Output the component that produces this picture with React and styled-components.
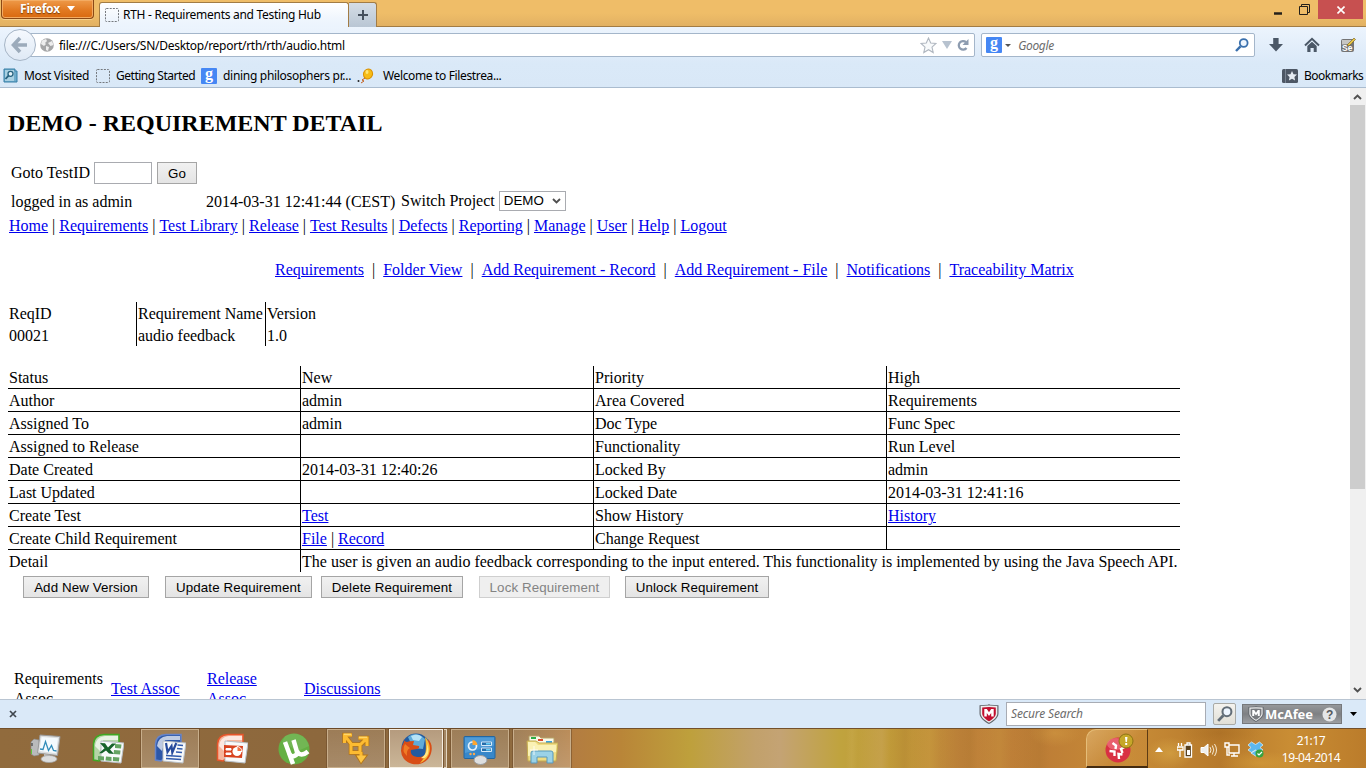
import React from "react";
import styled, { createGlobalStyle } from "styled-components";

const Global = createGlobalStyle`
  *{box-sizing:border-box}
  html,body{margin:0;padding:0;overflow:hidden;background:#fff}
  svg{display:block;flex:none}
`;
const ui = `"Noto Sans","Open Sans",sans-serif`;

const Window = styled.div`width:1366px;height:768px;display:flex;flex-direction:column;overflow:hidden;font:12px ${ui};color:#000;`;
const Label = styled.span`
  white-space:pre;line-height:16px;flex:none;
  font-size:${p => p.$size || 12}px;letter-spacing:${p => p.$ls || 0}px;
  color:${p => p.$color || "#000"};font-style:${p => (p.$italic ? "italic" : "normal")};
`;

/* ---------- title bar ---------- */
const TitleBar = styled.header`height:27px;flex:none;display:flex;align-items:flex-start;background:linear-gradient(#efbd68 0,#efbd68 50%,#e2b163 100%);border-bottom:1px solid #a27c45;`;
const FirefoxButton = styled.div`
  width:93px;height:19px;margin-left:1px;padding:0 0 1px 18px;display:flex;align-items:center;gap:7px;
  border:1px solid #8b4916;border-top:0;border-radius:0 0 4px 4px;
  background:linear-gradient(#ee9a49,#e27a22 55%,#d9690f);box-shadow:inset 0 0 0 1px #f3ab62,0 1px 0 #f5cf8c;
  color:#fff;font-weight:700;font-size:12px;line-height:16px;letter-spacing:-.2px;text-shadow:0 1px 1px #7a3c08;
`;
const Tab = styled.div`width:250px;height:26px;margin:2px 0 -1px 5px;padding:0 0 2px 5px;display:flex;align-items:center;gap:4px;border:1px solid #a27c45;border-bottom:0;border-radius:3px 3px 0 0;background:linear-gradient(#fff,#f0f6fd 60%,#ebf3fd);`;
const NewTab = styled.div`width:28px;height:25px;margin-top:2px;display:flex;align-items:center;justify-content:center;background:linear-gradient(#d5dde6,#b9c6d4);border:1px solid #a27c45;border-left:0;border-bottom:0;border-radius:0 3px 0 0;`;
const WindowControls = styled.div`margin-left:auto;display:flex;height:19px;align-items:center;`;
const Control = styled.div`width:${p => p.$w}px;height:19px;display:flex;align-items:center;justify-content:center;background:${p => p.$bg || "transparent"};`;

/* ---------- tool bars ---------- */
const Chrome = styled.div`height:61px;flex:none;background:linear-gradient(#ecf4fd 0,#dae9f8 60%,#d9e8f7 100%);border-bottom:1px solid #aabccf;`;
const NavBar = styled.div`height:36px;padding:6px 0 0 4px;display:flex;align-items:flex-start;`;
const BackButton = styled.div`width:32px;height:32px;margin-top:-4px;border-radius:50%;border:1px solid #a6b5c6;background:linear-gradient(#f5f9fe,#dfe9f5);display:flex;align-items:center;justify-content:center;z-index:1;flex:none;`;
const Field = styled.div`width:${p => p.$w}px;height:24px;display:flex;align-items:center;background:#fff;border:1px solid #a4b6ca;border-radius:2px;& > span{padding-top:1px}`;
const UrlField = styled(Field)`margin-left:-7px;padding:0 5px 0 10px;gap:5px;& > span{margin-right:auto}`;
const SearchField = styled(Field)`margin-left:6px;padding:0 5px 0 4px;`;
const SearchHint = styled(Label)`margin-left:7px;`;
const Buttons = styled.div`display:flex;gap:20px;margin-left:13px;height:24px;align-items:center;`;
const Bookmarks = styled.div`height:24px;padding:1px 0 0 3px;display:flex;align-items:center;`;
const Bookmark = styled.div`display:flex;align-items:center;gap:${p => p.$gap || 5}px;width:${p => p.$w}px;flex:none;`;
const Spacer = styled.div`flex:1;`;

/* ---------- page ---------- */
const Viewport = styled.main`height:611px;flex:none;display:flex;overflow:hidden;background:#fff;`;
const Page = styled.div`width:1350px;height:611px;padding:0 8px;overflow:hidden;font:16px/22px "Liberation Serif","Times New Roman",serif;`;
const Heading = styled.h2`margin:21px 0 0;font-size:24px;line-height:28px;font-weight:700;`;
const Line = styled.div`height:${p => p.$h}px;margin-top:${p => p.$mt || 0}px;padding-left:${p => p.$pl || 0}px;letter-spacing:${p => p.$ls || 0}px;display:flex;align-items:center;white-space:pre;`;
const LoginName = styled.span`width:195px;padding-top:1px;`;
const Stamp = styled.span`width:195px;padding-top:1px;`;
const A = styled.a`color:#0000ee;text-decoration:underline;`;
const TestInput = styled.input`width:58px;height:22px;margin:0 5px 0 4px;padding:0;border:1px solid #a9abb0;background:#fff;`;
const FormButton = styled.button`
  width:${p => p.$w}px;height:22px;margin:0 ${p => p.$mr || 0}px 0 0;padding:0;flex:none;white-space:nowrap;
  font:13.33px "Liberation Sans",Arial,sans-serif;letter-spacing:.1px;
  color:#000;border:1px solid #a5a5a5;background:linear-gradient(#f1f1f1,#e4e4e4);
  &:disabled{color:#838383;border-color:#cfcfcf;background:#efefef}
`;
const Select = styled.div`width:67px;height:20px;margin-left:4px;padding:0 4px;display:flex;align-items:center;justify-content:space-between;border:1px solid #a9abb0;font:13.33px/18px "Liberation Sans",Arial,sans-serif;`;
const SummaryGrid = styled.div`display:grid;grid-template-columns:128px 129px 80px;grid-auto-rows:22px;margin-top:21px;`;
const SummaryCell = styled.div`padding-left:1px;line-height:24px;white-space:nowrap;border-left:${p => (p.$line ? "1px solid #000" : "0")};`;
const DetailGrid = styled.div`display:grid;grid-template-columns:292px 293px 293px 294px;grid-auto-rows:23px;margin-top:20px;width:1172px;`;
const DetailCell = styled.div`
  padding-left:1px;line-height:24px;white-space:nowrap;
  border-left:${p => (p.$line ? "1px solid #000" : "0")};
  border-bottom:${p => (p.$last ? "0" : "1px solid #000")};
  grid-column:${p => (p.$wide ? "span 3" : "auto")};height:${p => (p.$last ? 22 : 23)}px;
`;
const Assoc = styled.div`display:flex;align-items:center;height:42px;margin-top:70px;padding-left:6px;line-height:20px;`;
const AssocCell = styled.div`width:${p => p.$w}px;flex:none;`;
const ScrollBar = styled.div`width:16px;height:611px;padding-right:1px;display:flex;flex-direction:column;background:#f0f0f0;align-items:center;`;
const ScrollArrow = styled.div`height:17px;display:flex;align-items:center;transform:${p => (p.$down ? "rotate(180deg)" : "none")};`;
const ScrollThumb = styled.div`width:15px;height:384px;background:#cdcdcd;margin-bottom:auto;`;

/* ---------- add-on bar ---------- */
const AddonBar = styled.div`height:29px;flex:none;display:flex;align-items:center;padding-left:9px;background:#dae9f8;border-top:1px solid #b9c5d2;`;
const CloseBar = styled.div`width:970px;flex:none;`;
const SecureInput = styled.div`width:200px;height:24px;margin-left:7px;padding-left:4px;display:flex;align-items:center;border:1px solid #a8acb4;background:#fff;`;
const SecureButton = styled.div`width:23px;height:22px;margin-left:7px;display:flex;align-items:center;justify-content:center;border:1px solid #a9aaa6;border-radius:2px;background:linear-gradient(#f4f3ef,#e1dfd6);`;
const McAfee = styled.div`width:100px;height:20px;margin:0 8px 0 6px;padding:0 4px 0 5px;display:flex;align-items:center;gap:1px;border:1px solid #77797c;background:linear-gradient(#96989b,#7e8083 50%,#9c9ea1);color:#fff;font:700 13px/18px ${ui};letter-spacing:-.1px;& > svg:last-child{margin-left:auto}`;

/* ---------- task bar ---------- */
const Taskbar = styled.footer`
  height:40px;flex:none;display:flex;padding-left:17px;border-top:1px solid #73502b;
  background:
    radial-gradient(ellipse 26px 14px at 1055px 4px,#e0ae4c50,transparent),
    radial-gradient(ellipse 24px 16px at 1170px 24px,#dfb14b80,transparent),
    radial-gradient(ellipse 40px 12px at 1260px 34px,#e2ad4260,transparent),
    radial-gradient(ellipse 40px 12px at 1220px 4px,#9f651e60,transparent),
    linear-gradient(91deg,transparent 846px,#d0b05a40 852px,transparent 858px,#d4b07a40 882px,transparent 890px,#a2702a30 905px,transparent 912px,#d2a84540 930px,transparent 940px,#9f6a2838 970px,transparent 978px,#d2a84530 1000px,transparent 1012px,#a2702a30 1040px,transparent 1050px),
    linear-gradient(90deg,#916b3d 0,#8d683d 320px,#8f6b3f 510px,#b37d41 575px,#b98538 620px,#bea03c 690px,#c2a16b 755px,#c4a374 780px,#c0a33e 840px,#c09838 900px,#bf833a 960px,#bd7d36 1040px,#c88c37 1130px,#b77a2c 1220px,#c98d34 1290px,#bb7c2b 1366px);
`;
const Task = styled.div`
  width:58px;height:39px;margin-right:4px;display:flex;align-items:center;justify-content:center;flex:none;
  border:1px solid ${p => (p.$on ? (p.$active ? "#f5eee2" : "#c8ae8b") : "transparent")};
  background:${p => (p.$active ? "linear-gradient(#b59b7e,#cbb698)" : p.$on ? "linear-gradient(#ffffff22,#ffffff3a)" : "transparent")};
  box-shadow:${p => (p.$on ? "0 0 0 1px #64452677" : "none")};
`;
const TaskStack = styled.div`width:58px;margin-right:4px;display:flex;flex:none;gap:1px;`;
const StackedTask = styled(Task)`width:54px;margin:0;`;
const StackEdge = styled.div`width:4px;border:1px solid #e3d6c0;border-left:0;background:#a48764;`;
const Alert = styled.div`width:62px;height:39px;margin-left:auto;padding-left:4px;display:flex;align-items:center;justify-content:center;border:1px solid #e5bd78;border-right-color:#5d3b13;border-bottom:2px solid #442b10;border-radius:10px 0 0 0;background:linear-gradient(135deg,#e3b774aa,#c98b3b55 60%);`;
const Tray = styled.div`width:118px;height:39px;display:flex;align-items:center;padding:2px 0 0 7px;gap:7px;& > svg:first-child{margin-right:6px}`;
const Clock = styled.div`width:100px;height:39px;padding:4px 10px 0 0;display:flex;flex-direction:column;align-items:center;color:#fff;font-size:12px;line-height:16.500px;letter-spacing:-.42px;`;

/* ---------- icons ---------- */
const Dotted = () => <svg width="14" height="14" viewBox="0 0 14 14"><rect x=".5" y=".5" width="13" height="13" rx="1" fill="none" stroke="#74787d" strokeDasharray="2 1.2" /></svg>;
const Down = ({ w = 8, h = 5, c = "#000" }) => <svg width={w} height={h} viewBox="0 0 8 5" preserveAspectRatio="none"><path d="M0 0h8L4 5z" fill={c} /></svg>;
const Back = () => <svg width="18" height="18" viewBox="0 0 18 18"><path d="M9 2 2.5 9 9 16M3.5 9H16" fill="none" stroke="#9cabbb" strokeWidth="3.6" /></svg>;
const Globe = () => <svg width="14" height="14" viewBox="0 0 14 14"><circle cx="7" cy="7" r="6.8" fill="#a5a6a7" /><path d="M2 2.5 6 1l1 2-2 2 1 1-2 2-3-2zM8 5l4-2 1.500 4-3 1zM6 8l3 1-1 4-2-1z" fill="#ededed" /></svg>;
const Star = () => <svg width="17" height="17" viewBox="0 0 17 17"><path d="m8.5 1 2.2 5 5.3.5-4 3.7 1.200 5.300-4.700-2.800-4.700 2.800L5 10.200 1 6.500 6.300 6z" fill="#f8fafb" stroke="#b0b7c0" strokeWidth="1.100" /></svg>;
const Reload = () => <svg width="12" height="13" viewBox="0 0 12 13"><path d="M9.500 9A4.300 4.300 0 1 1 9 3.200" fill="none" stroke="#8d9cb0" strokeWidth="2.300" /><path d="M11.500 0v6H5.500z" fill="#8d9cb0" /></svg>;
const GoogleTile = styled.b`width:16px;height:16px;flex:none;border-radius:1px;background:#4587f4;color:#fff;text-align:center;font:700 16px/11px "Liberation Serif",serif;`;
const Magnifier = ({ c = "#3a70ad", s = 14 }) => <svg width={s} height={s} viewBox="0 0 14 14"><circle cx="8.700" cy="5" r="3.900" fill="#eef6ff" stroke={c} strokeWidth="1.800" /><path d="m5.500 8.300-4.500 4.700" stroke={c} strokeWidth="2.400" /></svg>;
const Download = () => <svg width="16" height="16" viewBox="0 0 16 16"><path d="M5.200 1h5.400v6H15l-7 7.500L1 7h4.200z" fill="#4b5867" /></svg>;
const Home = () => <svg width="16" height="16" viewBox="0 0 16 16"><path d="m1 8.500 7-6.700 7 6.700" fill="none" stroke="#4b5867" strokeWidth="2" /><path d="m3.300 9 4.700-4.300L12.700 9v6h-3v-4H6.500v4H3.300z" fill="#4b5867" /></svg>;
const Selenium = () => <svg width="16" height="16" viewBox="0 0 16 16"><rect x="1" y="2" width="13" height="13" rx="2" fill="#747474" /><path d="M2 3h10v4L2 7.500z" fill="#c6c6c4" /><text x="2" y="14" fill="#fff" fontSize="8.500" fontWeight="700" fontFamily="Liberation Sans">Se</text><path d="M7 8 14 1l1.500 1.500L9 9z" fill="#e7c546" stroke="#6f5a22" strokeWidth=".6" /></svg>;
const MostVisited = () => <svg width="15" height="15" viewBox="0 0 15 15"><path d="M1 1h11v2h2v11H1z" fill="#6faccb" stroke="#367ea6" /><path d="M2 2h9v11H2z" fill="#a9d0e2" /><circle cx="7.500" cy="5.800" r="2.500" fill="#e3f2f8" stroke="#27627f" strokeWidth="1.300" /><path d="M5.600 7.700 2.500 11" stroke="#27627f" strokeWidth="1.800" /></svg>;
const Balloon = () => <svg width="17" height="16" viewBox="0 0 17 16"><ellipse cx="11" cy="6" rx="4.500" ry="5" fill="#f7bc16" stroke="#d99205" transform="rotate(20 11 6)" /><ellipse cx="10" cy="4" rx="1.500" ry="2" fill="#ffe674" /><path d="m8 10-3 2 2 1-3 2" stroke="#c4601e" fill="none" /><circle cx="1.500" cy="13" r="1" fill="#222" /></svg>;
const BookmarkMenu = () => <svg width="16" height="14" viewBox="0 0 16 14"><rect width="16" height="14" rx="1.500" fill="#4d5765" /><path d="M3.500 0v14" stroke="#788391" /><path d="m10 2 1.500 3.200 3.500.4-2.600 2.300.7 3.600-3.100-1.800-3.100 1.800.7-3.600L5 5.600l3.500-.4z" fill="#e6edf5" /></svg>;
const Chevron = () => <svg width="9" height="6" viewBox="0 0 9 6"><path d="m1 5 3.500-3.500L8 5" fill="none" stroke="#505050" strokeWidth="1.900" /></svg>;
const Cross = () => <svg width="8" height="8" viewBox="0 0 8 8"><path d="m1 1 6 6M7 1 1 7" stroke="#3f464e" strokeWidth="1.700" /></svg>;
const Shield = ({ c = "#c20f2f", w = 20 }) => <svg width={w} height={w} viewBox="0 0 20 20"><path d="m10 0 1 .7 8.500.5v8.300C19.500 14 14 18 10 20 6 18 .5 14 .5 9.500V1.200L9 .7z" fill="#62676d" /><path d="M10 1.500 18.300 2v7.500c0 4-4.800 7.400-8.300 9.200-3.500-1.800-8.300-5.200-8.300-9.200V2z" fill="#eee" /><path d="m10 3 6.800.4v6c0 3.300-4 6.200-6.800 7.900-2.800-1.700-6.800-4.600-6.800-7.900v-6z" fill={c} /><path d="M5.300 12.500V5h2.500L10 8.300 12.200 5h2.500v7.500h-2.500V9L10 12 7.800 9v3.500z" fill="#fff" /></svg>;

const Monitor = () => <svg width="32" height="32" viewBox="0 0 32 32"><path d="M1 9 4 6l5 1v15l-5 1-3-2z" fill="#b9babb" stroke="#8a8a8a" strokeWidth=".6" /><path d="M2 10v3" stroke="#2b2b2b" /><path d="M1.500 16v5" stroke="#63c33c" /><path d="m10 2 20 1.500-2.500 19L7.500 20z" fill="#dcdedf" stroke="#999" /><path d="m11.500 4 16.500 1.200-2 15L9.500 18z" fill="#f5fbfe" /><path d="m10 16 3 .5 2.500-8 3 9 3-5 2 5 3 .5" fill="none" stroke="#318cb9" strokeWidth="1.300" /><path d="m14 21 6 1v4h-6z" fill="#bfc1c2" /><ellipse cx="19" cy="26" rx="8" ry="3.500" fill="#dcdddd" stroke="#a4a5a6" strokeWidth=".7" /></svg>;
const OfficeBase = ({ a, b, children }) => <svg width="32" height="32" viewBox="0 0 32 32"><path d="M1.500 27V11Q2 2 12 1.500h15v9L7 28z" fill={a} stroke={b} strokeWidth="1.500" /><path d="M3 13Q4 4 13 3h13v4H11L8 18z" fill="#ffffffb0" /><path d="m9 8 23 2-3 20-20-2z" fill="#f8fafb" stroke="#b9bfc5" />{children}</svg>;
const Excel = () => <OfficeBase a="#b5d5a8" b="#3fa823"><path d="m8 10 5 .3 3 4.200 4-4h4l-6 6 4 4.500-5-.4-3-3-4 2.700H7l5.500-5z" fill="#17632b" /><path d="m23 11 6.500.5-.5 4-6-.5zM22 17l6.500.5-.4 4-6.500-.5zM6 23l6 .5v4l-6-.5zM14 23.500l5.500.4v4l-6-.5zM21 24l6.400.4-.5 4-6-.5z" fill="#65a463" /></OfficeBase>;
const Word = () => <OfficeBase a="#2d57a8" b="#6684c9"><path d="m12 10 1.500 9 4-6 .8 6.500 4-9.500" fill="none" stroke="#274b9c" strokeWidth="2.200" /><path d="m23.500 12 5.500.5M23 15.500l5.500.5M22 19l6 .5M12 22.500l15.500 1M12 25.500l15 1" stroke="#315bac" strokeWidth="1.700" /></OfficeBase>;
const Ppt = () => <OfficeBase a="#f6b69c" b="#e7552a"><path d="m8 12 19 1-1 12-18-1z" fill="#d8431f" /><circle cx="21" cy="18.500" r="4.500" fill="#fff" /><path d="M21 18.500v-5a5 5 0 0 1 5 5z" fill="#ef7245" stroke="#fff" /><path d="M10 15.500h5v1.500h-5zM10 20h5v1.500h-5z" fill="#fff" stroke="#fff" /></OfficeBase>;
const UTorrent = () => <svg width="32" height="32" viewBox="0 0 32 32"><circle cx="16" cy="16" r="15.500" fill="#64af43" /><path d="M7 3A16 16 0 0 1 31 13L20 18 4 9z" fill="#ffffff18" /><path d="m7 9 4.500 12c2 4 8 2 7.500-2L15.500 7M19 18c2 5 7 4 11 .5M11 20l4 11" fill="none" stroke="#fff" strokeWidth="4.500" /></svg>;
const VMware = () => <svg width="30" height="33" viewBox="0 0 30 33"><g fill="none" stroke="#b57618" strokeWidth="4.600"><path d="M11 3H3.500v8M4 4l7 9M17.500 6H26v8M25 7l-6 6M10 12.500h9v8h-9zM20 20v5" /></g><path d="M13.500 22.500h14L20 32.500z" fill="#b57618" /><g fill="none" stroke="#fdbb31" strokeWidth="3"><path d="M11 3H3.500v8M4 4l7 9M17.500 6H26v8M25 7l-6 6M10 12.500h9v8h-9zM20 20v5" /></g><path d="M15.500 23.500h10L20 31z" fill="#fdc544" /><path d="M3 2.200h7M18 5.200h8" stroke="#ffe384" strokeWidth="1" /></svg>;
const Firefox = () => <svg width="34" height="34" viewBox="0 0 34 34"><circle cx="17" cy="16" r="14.500" fill="#235a9f" /><path d="M9 5Q17-2 26 7l-2 10-10-1z" fill="#5fabd9" /><path d="M12 4q7-3 11 1l-3 4-6-1z" fill="#b6e3f7" /><path d="M4 6q1 3 1 4-6 9 0 17c7 8 21 7 26-3 3-7 2-13-2-17 1 9-1 18-9 18-6 0-9-3-8-7l6-1q3-1 2-3l-6-1 1-4q-5 0-7 1Q4 9 4 6" fill="#d84d16" /><path d="M6 12q-4 7 2 12-1-6 3-8-3-2-5-4" fill="#f07b25" /><path d="M26 5c8 8 6 22-5 26 6-6 7-13 5-26" fill="#f8b835" /><path d="M22 26c5-3 7-9 6-15 4 10-1 17-6 15" fill="#ffe988" /></svg>;
const ControlPanel = () => <svg width="34" height="32" viewBox="0 0 34 32"><rect x="1" y="3.500" width="31" height="22" rx="1" fill="#3787ca" stroke="#2266a1" /><path d="M2 4.500h29v8L2 20z" fill="#67afe1" opacity=".5" /><circle cx="9.500" cy="13" r="4" fill="none" stroke="#e6f2fc" strokeWidth="1.700" /><path d="M9.500 12V7a6 6 0 0 1 5 5z" fill="#ffa52d" /><path d="M18.500 9h10v3.500h-10zM18.500 15h10v3.500h-10z" fill="#246daa" stroke="#d5eaf9" /><path d="M23 10h4.500v1.500H23zM23 16h4.500v1.500H23z" fill="#67d0f6" /><circle cx="7.500" cy="21" r="1.200" fill="#ffa94b" /><circle cx="11" cy="21" r="1.200" fill="#ffa94b" /><ellipse cx="17.500" cy="27" rx="6.500" ry="4.500" fill="#dedfe0" stroke="#9a9c9e" /></svg>;
const Explorer = () => <svg width="32" height="32" viewBox="0 0 32 32"><path d="M3 3h10l2 2h13v10H3z" fill="#fafae9" stroke="#b6a366" /><path d="M5 4h5v2H5z" fill="#2dae46" /><path d="M12 6h5v2h-5z" fill="#d84b2e" /><path d="M20 8h6v2h-6z" fill="#3ca2db" /><path d="M1 8h9l3 2h19l-2 18H2z" fill="#efdc83" stroke="#c3ab50" /><path d="M2 9h7l3 3h18v7L2 23z" fill="#faf1b5" /><path d="M5 30V20q0-2 2-2h18q2 0 2 2v10h-6v-6H11v6z" fill="#9bd2e7" stroke="#5899bc" /><path d="M8 13v9M4 17h8" stroke="#fff" strokeWidth=".8" /></svg>;
const VirusAlert = () => <svg width="30" height="30" viewBox="0 0 30 30"><circle cx="14" cy="17" r="12.500" fill="#d93043" /><ellipse cx="12" cy="11" rx="9" ry="6" fill="#ef7580" opacity=".7" /><path d="M8.500 10 12 12.500l-.5 3.500M20.500 14l-3.500 2 1.500 4M5.500 18l5 .5v4.500M15 26l-.5-5 4 .5" fill="none" stroke="#fff" strokeWidth="2.400" /><circle cx="22" cy="8" r="7" fill="#c6a729" stroke="#8d7213" /><path d="M21 4h2.500l-.6 5h-1.300zM21.200 10h2v2h-2z" fill="#fff" /></svg>;
const Power = () => <svg width="16" height="16" viewBox="0 0 16 16"><path d="M1.500 1v3M4.500 1v3M0 5h6v3H0zM3 8v7" fill="none" stroke="#fff" strokeWidth="1.300" /><path d="M8 3h6.500v12H8zM10 1h3v2h-3z" fill="#59401d" stroke="#fff" strokeWidth="1.300" /><path d="M10 8h3v5h-3z" fill="#fff" /></svg>;
const Speaker = () => <svg width="17" height="16" viewBox="0 0 17 16"><path d="M1 5.500h3L8 2v12l-4-3.500H1z" fill="#eee" stroke="#fff" /><path d="M10 5q2 3 0 6M12.300 3.500q3 4.500 0 9M14.500 2q4 6 0 12" fill="none" stroke="#f6ead3" /></svg>;
const Network = () => <svg width="16" height="15" viewBox="0 0 16 15"><path d="M5 3h10v8H5zM10 11v3M7 14h7M1 1h4v4H1zM3 5v8h3" fill="none" stroke="#fff" strokeWidth="1.400" /></svg>;
const Dropbox = () => <svg width="17" height="17" viewBox="0 0 17 17"><path d="m4.500 1 4 2.500 4-2.500L16 4l-3 2.500 3 2.500-4 2.500L8.500 9l-4 2.500L1 9l3-2.500L1 4zM4 12l4.500-2.500L13 12l-4.500 3z" fill="#5db8ee" stroke="#e3f5ff" strokeWidth=".7" /><circle cx="12.500" cy="12.500" r="4" fill="#35a340" /><path d="m10.500 12.500 1.500 1.500 3-3" fill="none" stroke="#fff" strokeWidth="1.200" /></svg>;

/* ---------- data ---------- */
const MENU = ["Home", "Requirements", "Test Library", "Release", "Test Results", "Defects", "Reporting", "Manage", "User", "Help", "Logout"];
const SUBMENU = ["Requirements", "Folder View", "Add Requirement - Record", "Add Requirement - File", "Notifications", "Traceability Matrix"];
const DETAILS = [
  ["Status", "New", "Priority", "High"],
  ["Author", "admin", "Area Covered", "Requirements"],
  ["Assigned To", "admin", "Doc Type", "Func Spec"],
  ["Assigned to Release", "", "Functionality", "Run Level"],
  ["Date Created", "2014-03-31 12:40:26", "Locked By", "admin"],
  ["Last Updated", "", "Locked Date", "2014-03-31 12:41:16"],
  ["Create Test", <A>Test</A>, "Show History", <A>History</A>],
  ["Create Child Requirement", <><A>File</A> | <A>Record</A></>, "Change Request", ""],
];
const Links = ({ items, sep }) => items.map((t, i) => <React.Fragment key={t}>{i > 0 && sep}<A>{t}</A></React.Fragment>);

export default function App() {
  return (
    <Window>
      <Global />
      <TitleBar>
        <FirefoxButton>Firefox <Down w={8} h={5} c="#fff" /></FirefoxButton>
        <Tab><Dotted /><Label $ls={-0.28}>RTH - Requirements and Testing Hub</Label></Tab>
        <NewTab><svg width="12" height="12"><path d="M6 1v10M1 6h10" stroke="#46505d" strokeWidth="2" /></svg></NewTab>
        <WindowControls>
          <Control $w={26}><svg width="8" height="12"><path d="M0 9.500h8" stroke="#24201a" strokeWidth="2.500" /></svg></Control>
          <Control $w={27}><svg width="11" height="11"><path d="M.5 2.500h8v8h-8zM2.500 2V.5h8v8H9" fill="none" stroke="#24201a" /></svg></Control>
          <Control $w={45} $bg="#c75050"><svg width="8" height="8"><path d="m.5.500 7 7m0-7-7 7" stroke="#fff" strokeWidth="1.600" /></svg></Control>
          <Control $w={3} />
        </WindowControls>
      </TitleBar>
      <Chrome>
        <NavBar>
          <BackButton><Back /></BackButton>
          <UrlField $w={946}>
            <Globe /><Label $ls={-0.27}>file:///C:/Users/SN/Desktop/report/rth/rth/audio.html</Label>
            <Star /><Down w={10} h={8} c="#b7c2cf" /><Reload />
          </UrlField>
          <SearchField $w={274}>
            <GoogleTile>g</GoogleTile>&nbsp;<Down w={6} h={3} c="#555" />
            <SearchHint $italic $color="#6c6c6c" $ls={-0.3}>Google</SearchHint><Spacer /><Magnifier />
          </SearchField>
          <Buttons><Download /><Home /><Selenium /></Buttons>
        </NavBar>
        <Bookmarks>
          <Bookmark $w={93} $gap={6}><MostVisited /><Label $ls={-0.32}>Most Visited</Label></Bookmark>
          <Bookmark $w={105} $gap={6}><Dotted /><Label $ls={-0.48}>Getting Started</Label></Bookmark>
          <Bookmark $w={156} $gap={6}><GoogleTile>g</GoogleTile><Label $ls={-0.3}>dining philosophers pr...</Label></Bookmark>
          <Bookmark $w={160} $gap={9}><Balloon /><Label $ls={-0.36}>Welcome to Filestrea...</Label></Bookmark>
          <Spacer />
          <Bookmark $w={84} $gap={6}><BookmarkMenu /><Label $ls={-0.5}>Bookmarks</Label></Bookmark>
        </Bookmarks>
      </Chrome>

      <Viewport>
        <Page>
          <Heading>DEMO - REQUIREMENT DETAIL</Heading>
          <Line $h={24} $mt={24} $pl={3}>Goto TestID<TestInput readOnly /><FormButton $w={40}>Go</FormButton></Line>
          <Line $h={22} $mt={5} $pl={3}><LoginName>logged in as admin</LoginName><Stamp>2014-03-31 12:41:44 (CEST)</Stamp>Switch Project
            <Select>DEMO<ScrollArrow $down><Chevron /></ScrollArrow></Select></Line>
          <Line $h={22} $mt={3} $pl={1}><Links items={MENU} sep=" | " /></Line>
          <Line $h={22} $mt={22} $pl={267} $ls={0.006}><Links items={SUBMENU} sep="  |  " /></Line>
          <SummaryGrid>
            {["ReqID", "Requirement Name", "Version", "00021", "audio feedback", "1.0"].map((t, i) => <SummaryCell key={t} $line={i % 3 > 0}>{t}</SummaryCell>)}
          </SummaryGrid>
          <DetailGrid>
            {DETAILS.flatMap((r, y) => r.map((c, x) => <DetailCell key={y + "-" + x} $line={x > 0}>{c}</DetailCell>))}
            <DetailCell $last>Detail</DetailCell>
            <DetailCell $last $line $wide>The user is given an audio feedback corresponding to the input entered. This functionality is implemented by using the Java Speech API.</DetailCell>
          </DetailGrid>
          <Line $h={22} $mt={3} $pl={15}>
            <FormButton $w={126} $mr={16}>Add New Version</FormButton>
            <FormButton $w={147} $mr={9}>Update Requirement</FormButton>
            <FormButton $w={142} $mr={16}>Delete Requirement</FormButton>
            <FormButton $w={131} $mr={15} disabled>Lock Requirement</FormButton>
            <FormButton $w={144}>Unlock Requirement</FormButton>
          </Line>
          <Assoc>
            <AssocCell $w={97}>Requirements<br />Assoc</AssocCell>
            <AssocCell $w={96}><A>Test Assoc</A></AssocCell>
            <AssocCell $w={97}><A>Release<br />Assoc</A></AssocCell>
            <AssocCell $w={97}><A>Discussions</A></AssocCell>
          </Assoc>
        </Page>
        <ScrollBar><ScrollArrow><Chevron /></ScrollArrow><ScrollThumb /><ScrollArrow $down><Chevron /></ScrollArrow></ScrollBar>
      </Viewport>

      <AddonBar>
        <CloseBar><Cross /></CloseBar>
        <Shield />
        <SecureInput><Label $italic $color="#6c6c6c" $ls={-0.15}>Secure Search</Label></SecureInput>
        <SecureButton><Magnifier c="#626d77" s={16} /></SecureButton>
        <McAfee><Shield c="#777a7e" w={16} />McAfee<svg width="15" height="15"><circle cx="7.500" cy="7.500" r="7" fill="#e5e6e7" /><text x="4" y="12" fontSize="12" fontWeight="700" fontFamily="Liberation Sans" fill="#55585c">?</text></svg></McAfee>
        <Down w={7} h={4} />
      </AddonBar>

      <Taskbar>
        <Task><Monitor /></Task><Task><Excel /></Task><Task $on><Word /></Task><Task><Ppt /></Task><Task><UTorrent /></Task>
        <Task $on><VMware /></Task>
        <TaskStack><StackedTask $on $active><Firefox /></StackedTask><StackEdge /></TaskStack>
        <Task $on><ControlPanel /></Task><Task $on><Explorer /></Task>
        <Alert><VirusAlert /></Alert>
        <Tray><svg width="9" height="5"><path d="M0 5h8L4 0z" fill="#fff" /></svg><Power /><Speaker /><Network /><Dropbox /></Tray>
        <Clock><span>21:17</span><span>19-04-2014</span></Clock>
      </Taskbar>
    </Window>
  );
}
